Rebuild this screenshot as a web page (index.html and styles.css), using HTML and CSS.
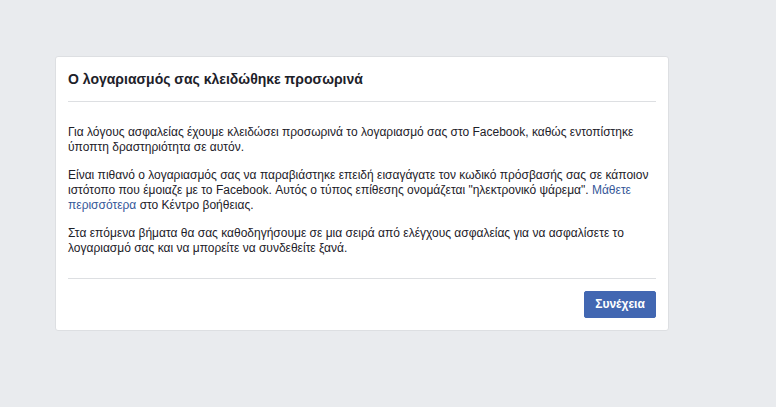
FILE: index.html
```html
<!DOCTYPE html>
<html lang="el">
<head>
<meta charset="utf-8">
<link rel="stylesheet" href="styles.css">
</head>
<body>
<div class="page">
  <div class="card">
    <div class="card-header">
      <h2 class="title">Ο λογαριασμός σας κλειδώθηκε προσωρινά</h2>
    </div>
    <div class="card-body">
      <p>Για λόγους ασφαλείας έχουμε κλειδώσει προσωρινά το λογαριασμό σας στο Facebook, καθώς εντοπίστηκε ύποπτη δραστηριότητα σε αυτόν.</p>
      <p>Είναι πιθανό ο λογαριασμός σας να παραβιάστηκε επειδή εισαγάγατε τον κωδικό πρόσβασής σας σε κάποιον ιστότοπο που έμοιαζε με το Facebook. Αυτός ο τύπος επίθεσης ονομάζεται "ηλεκτρονικό ψάρεμα". <a class="link" href="#">Μάθετε περισσότερα</a> στο Κέντρο βοήθειας.</p>
      <p>Στα επόμενα βήματα θα σας καθοδηγήσουμε σε μια σειρά από ελέγχους ασφαλείας για να ασφαλίσετε το λογαριασμό σας και να μπορείτε να συνδεθείτε ξανά.</p>
    </div>
    <div class="card-footer">
      <button class="btn-primary" type="button">Συνέχεια</button>
    </div>
  </div>
</div>
</body>
</html>
```

FILE: styles.css
```css
html, body {
  margin: 0;
  padding: 0;
  background: #e9ebee;
  font-family: "Liberation Sans", Arial, Helvetica, sans-serif;
  color: #1d2129;
}

.page {
  padding: 56px 0 0 55px;
}

.card {
  width: 614px;
  background: #fff;
  border: 1px solid #dddfe2;
  border-radius: 3px;
  padding: 0 12px;
  box-sizing: border-box;
}

.card-header {
  padding: 13px 0 13px;
  border-bottom: 1px solid #dddfe2;
}

.title {
  margin: 0;
  font-size: 14px;
  line-height: 18px;
  font-weight: bold;
  color: #1d2129;
}

.card-body {
  padding: 23px 0 9px;
  border-bottom: 1px solid #dddfe2;
}

.card-body p {
  margin: 0 0 13px;
  font-size: 12px;
  line-height: 15px;
}

.link {
  color: #365899;
  text-decoration: none;
}

.card-footer {
  display: flex;
  justify-content: flex-end;
  padding: 12px 0 12px;
}

.btn-primary {
  height: 27px;
  width: 72px;
  padding: 0;
  border: 1px solid #4267b2;
  border-radius: 2px;
  background: #4267b2;
  color: #fff;
  font-family: "Liberation Sans", Arial, Helvetica, sans-serif;
  font-size: 12px;
  font-weight: bold;
  line-height: 25px;
  cursor: pointer;
}
```
